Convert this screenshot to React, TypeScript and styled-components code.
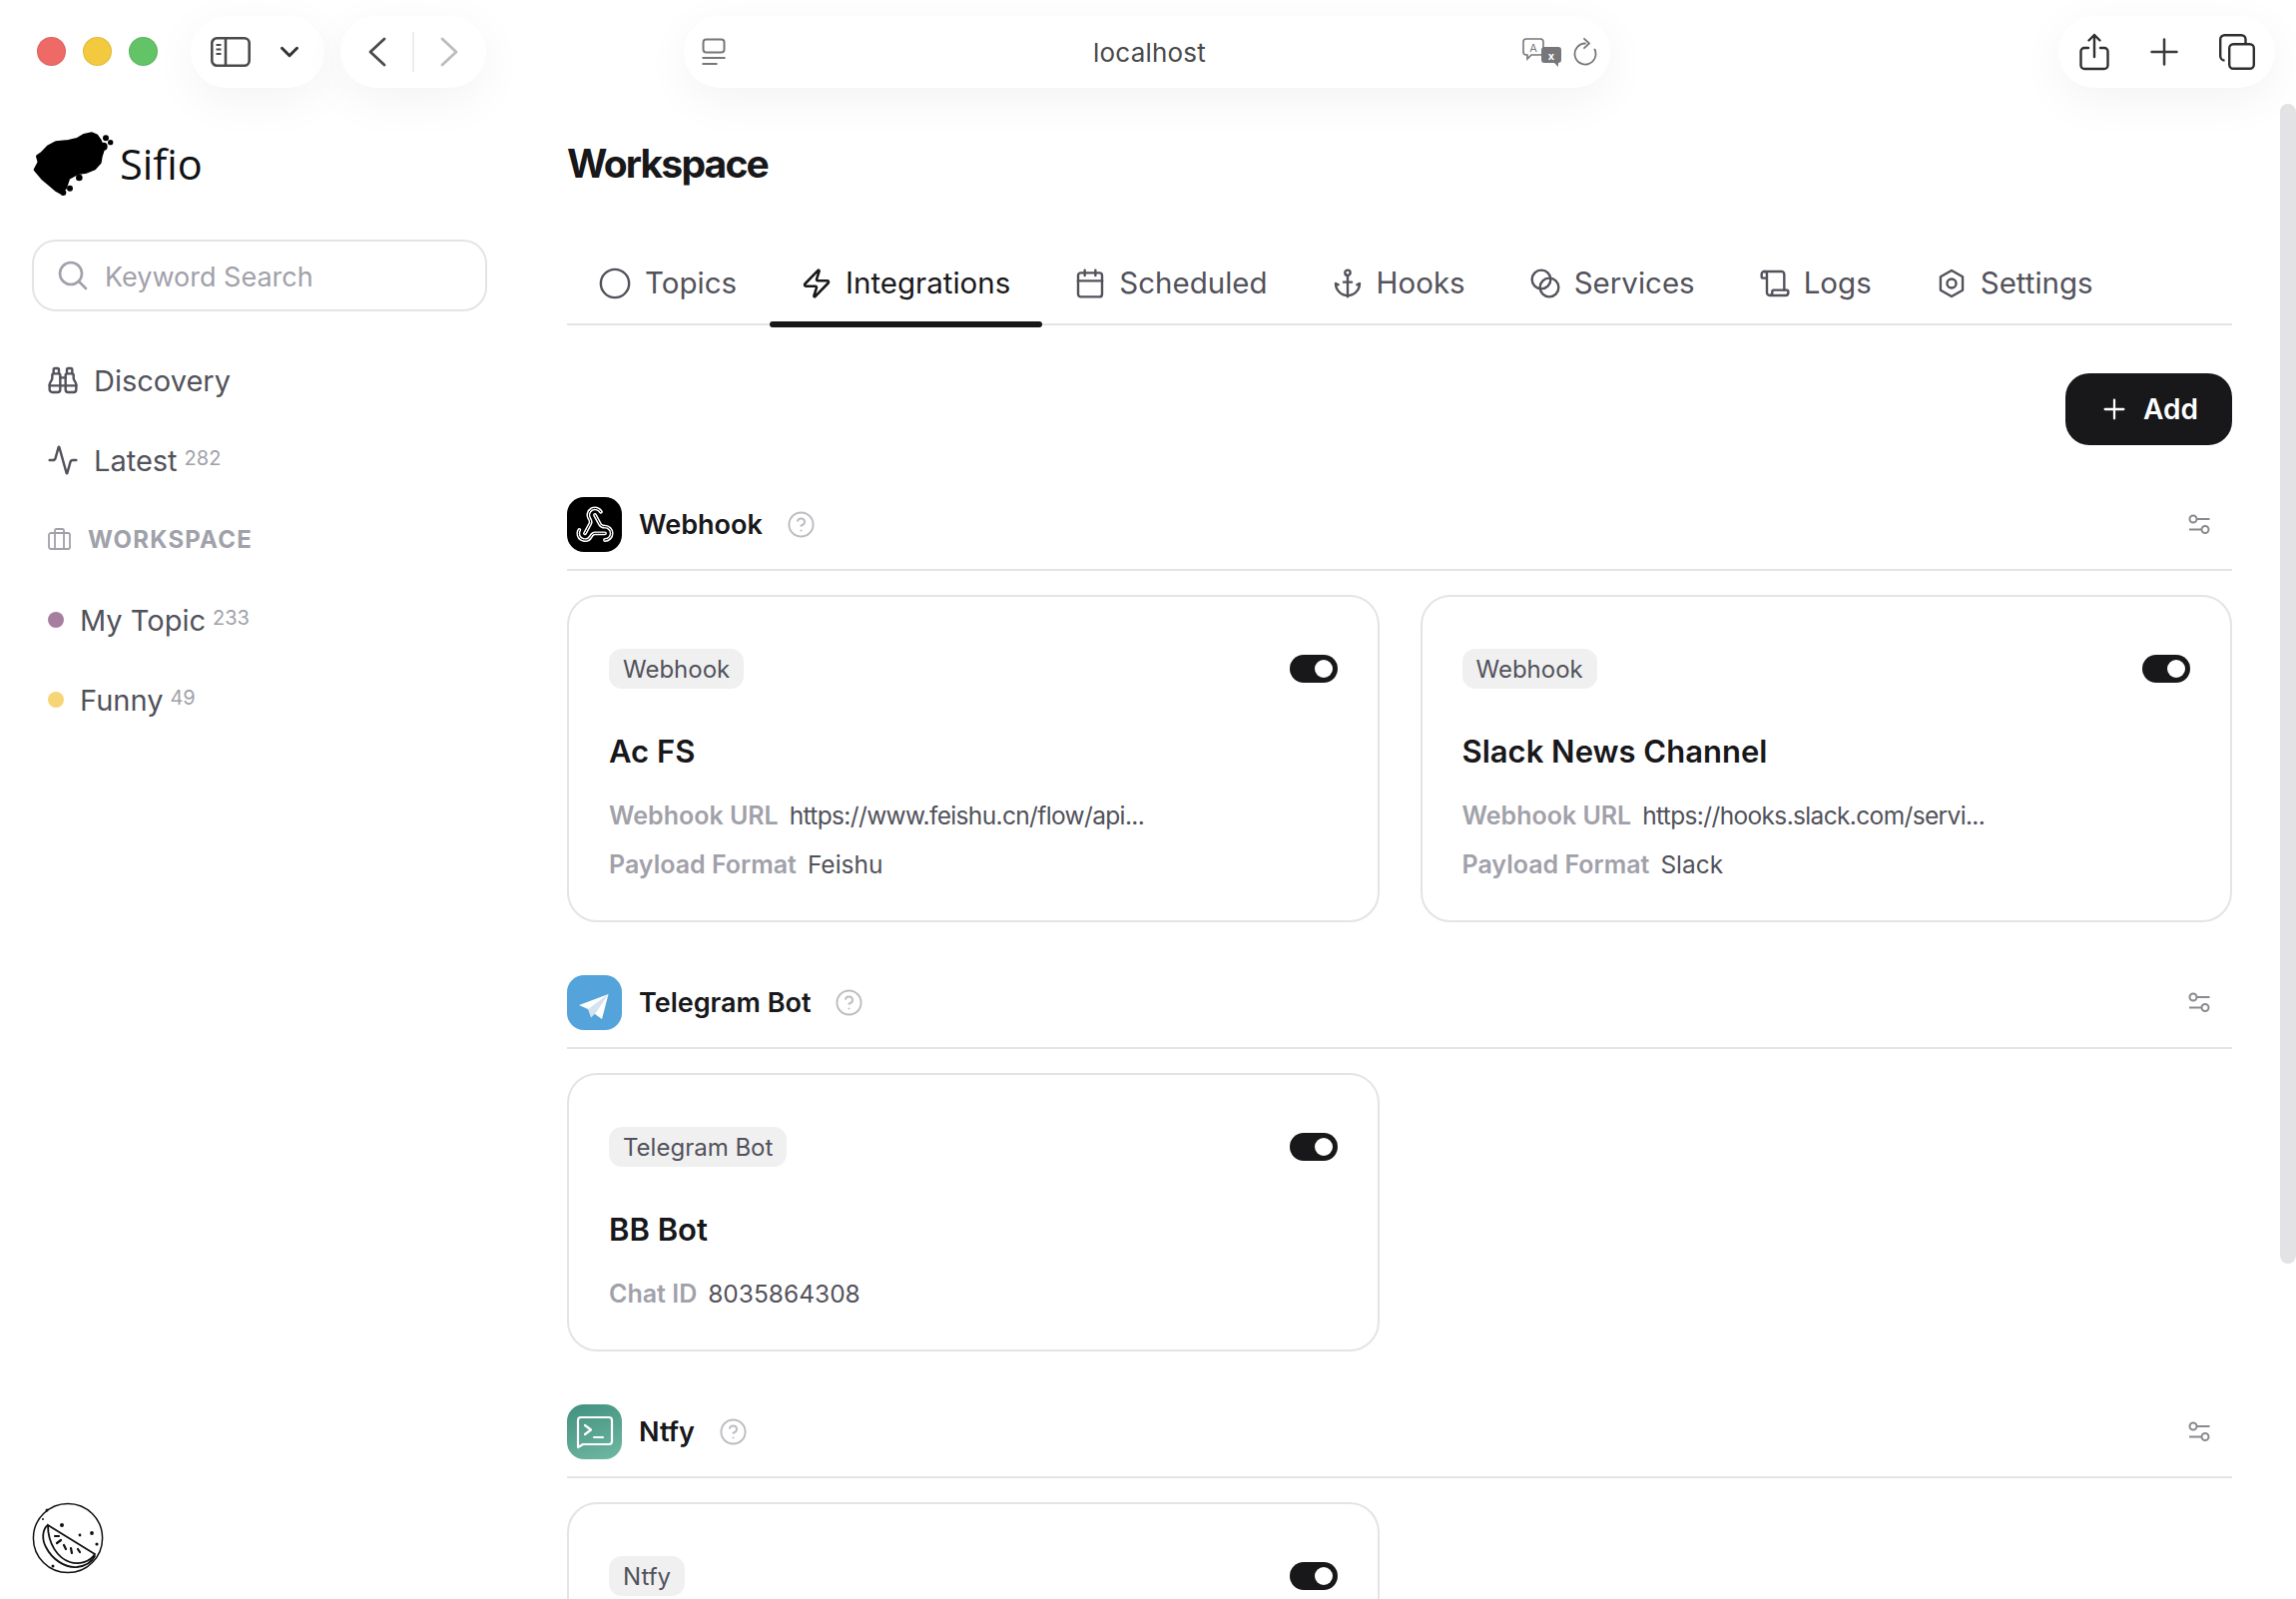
import styled, { createGlobalStyle } from "styled-components";
import {
  Activity,
  Anchor,
  Binoculars,
  Blend,
  Calendar,
  ChevronDown,
  Circle,
  CircleHelp,
  Plus,
  Scroll,
  Zap,
} from "lucide-react";
import type { ReactNode } from "react";

const SettingsHex = ({ size = 32 }: { size?: number }) => (
  <svg width={size} height={size} viewBox="0 0 24 24" fill="none" stroke="currentColor" strokeWidth="1.8" strokeLinejoin="round">
    <path d="M12 2.2 20.3 7v10L12 21.8 3.7 17V7z" />
    <circle cx="12" cy="12" r="3.4" />
  </svg>
);

const tabs: { label: string; icon: ReactNode; active?: boolean }[] = [
  { label: "Topics", icon: <Circle size={34} strokeWidth={1.7} /> },
  { label: "Integrations", icon: <Zap size={32} strokeWidth={1.9} />, active: true },
  { label: "Scheduled", icon: <Calendar size={32} strokeWidth={1.8} /> },
  { label: "Hooks", icon: <Anchor size={32} strokeWidth={1.8} /> },
  { label: "Services", icon: <Blend size={32} strokeWidth={1.8} /> },
  { label: "Logs", icon: <Scroll size={32} strokeWidth={1.8} /> },
  { label: "Settings", icon: <SettingsHex /> },
];

const Frog = () => (
  <svg width="84" height="67" viewBox="40 30 252 201" fill="#000">
    <path
      stroke="#000"
      strokeWidth="10"
      strokeLinejoin="round"
      d="M50 150 62 128 57 110 70 101 88 82 112 69 150 65 176 59 196 47 220 42 234 48 244 62 254 88 247 110 244 128 228 146 204 156 178 160 150 175 140 205 125 218 112 210 98 198 72 176z"
    />
    <circle cx="262" cy="55" r="9" />
    <circle cx="276" cy="68" r="8" />
    <circle cx="255" cy="80" r="12" />
    <circle cx="182" cy="174" r="10" />
    <circle cx="154" cy="206" r="9" />
    <circle cx="134" cy="219" r="9" />
  </svg>
);

const Melon = () => (
  <svg width="72" height="72" viewBox="0 0 72 72" fill="none" stroke="#111" strokeLinecap="round">
    <circle cx="36" cy="36" r="34.6" strokeWidth="1.5" />
    <path strokeWidth="1.8" d="M16 23 63 52C58 60 47 63 38 60 26 56 16 42 16 23z" />
    <path strokeWidth="1.8" d="M16 23C10 27 10 38 14 45 20 57 33 66 45 65 53 64 60 60 63 54" />
    <path strokeWidth="2.2" d="M23 34H27M25 41 29 38M32 43 34 47M39 46 40 51M46 47 48 50" />
    <g fill="#111" stroke="none">
      <circle cx="30" cy="23" r="2" />
      <circle cx="48" cy="33" r="1.4" />
      <circle cx="60" cy="31" r="1.9" />
      <circle cx="65" cy="42" r="1.6" />
      <circle cx="21" cy="64" r="1.5" />
      <circle cx="15" cy="8" r="1.5" />
      <circle cx="11" cy="17" r="1" />
    </g>
  </svg>
);

const WebhookGlyph = () => {
  const paths = (
    <>
      <path d="M18 16.98h-5.99c-1.1 0-1.95.94-2.48 1.9A4 4 0 0 1 2 17c.01-.7.2-1.4.57-2" />
      <path d="m6 17 3.13-5.78c.53-.97.1-2.18-.5-3.1a4 4 0 1 1 6.89-4.06" />
      <path d="m12 6 3.13 5.73C15.66 12.7 16.9 13 18 13a4 4 0 0 1 0 8" />
    </>
  );
  return (
    <svg width="40" height="40" viewBox="0 0 24 24" fill="none" strokeLinecap="round" strokeLinejoin="round">
      <g stroke="#fff" strokeWidth="2.3">{paths}</g>
      <g stroke="#000" strokeWidth="0.6">{paths}</g>
    </svg>
  );
};

const PlaneGlyph = () => (
  <svg width="55" height="55" viewBox="0 0 55 55">
    <path fill="#fff" d="M41.5 19 12 30l9 4 14 10z" />
    <path fill="#d3e3ef" d="M41.5 19 21 34l3 8.5 5-5z" />
  </svg>
);

const NtfyGlyph = () => (
  <svg width="38" height="34" viewBox="0 0 38 34" fill="none" stroke="#fff" strokeLinecap="round" strokeLinejoin="round">
    <path strokeWidth="2.2" d="M5 2h28a3 3 0 0 1 3 3v21a3 3 0 0 1-3 3H7l-5 3V5a3 3 0 0 1 3-3z" />
    <path strokeWidth="2.2" d="m9 10 6 4.5L9 19M18 22h9" />
  </svg>
);

const Chevron = ({ points, color }: { points: string; color: string }) => (
  <svg width="18" height="30" viewBox="0 0 18 30" fill="none" stroke={color} strokeWidth="2.8" strokeLinecap="round" strokeLinejoin="round">
    <path d={points} />
  </svg>
);

const integrations = [
  {
    name: "Webhook",
    logo: <WebhookGlyph />,
    logoBg: "#000",
    cards: [
      {
        title: "Ac FS",
        rows: [
          ["Webhook URL", "https://www.feishu.cn/flow/api..."],
          ["Payload Format", "Feishu"],
        ],
      },
      {
        title: "Slack News Channel",
        rows: [
          ["Webhook URL", "https://hooks.slack.com/servi..."],
          ["Payload Format", "Slack"],
        ],
      },
    ],
  },
  {
    name: "Telegram Bot",
    logo: <PlaneGlyph />,
    logoBg: "#54a3db",
    cards: [{ title: "BB Bot", rows: [["Chat ID", "8035864308"]] }],
  },
  {
    name: "Ntfy",
    logo: <NtfyGlyph />,
    logoBg: "linear-gradient(160deg, #41907f, #70b8a2)",
    cards: [{ title: "", rows: [] as string[][] }],
  },
];

export default function App() {
  return (
    <Shell>
      <GlobalStyle />
      <Toolbar>
        <Lights>
          <Light $color="#ee6a66" />
          <Light $color="#f3c940" />
          <Light $color="#62c466" />
        </Lights>
        <SidebarPill>
          <svg width="40" height="30" viewBox="0 0 40 30" fill="none" stroke="#4a4a4c" strokeWidth="2.6">
            <rect x="1.3" y="1.3" width="37.4" height="27.4" rx="5" />
            <path d="M15 1.3v27.4" />
            <path strokeWidth="2" d="M5.5 8h5M5.5 12.5h5M5.5 17h5" />
          </svg>
          <ChevronDown size={30} strokeWidth={2.4} color="#333" />
        </SidebarPill>
        <NavPill>
          <Chevron points="M16 2 2 15l14 13" color="#4a4a4c" />
          <NavDivider />
          <Chevron points="M2 2l14 13L2 28" color="#bcbcbc" />
        </NavPill>
        <AddressPill>
          <svg width="24" height="28" viewBox="0 0 24 28" fill="none" stroke="#77777a" strokeWidth="2">
            <rect x="1.5" y="1.5" width="21" height="13" rx="3" />
            <path d="M0.5 20h23M0.5 26h15" />
          </svg>
          <AddressText>localhost</AddressText>
          <AddressActions>
            <svg width="40" height="29" viewBox="0 0 40 29">
              <path fill="none" stroke="#77777a" strokeWidth="1.6" d="M4 1h14a3 3 0 0 1 3 3v10a3 3 0 0 1-3 3H9l-4 4v-4H4a3 3 0 0 1-3-3V4a3 3 0 0 1 3-3z" />
              <text x="11" y="13.5" fontSize="11" textAnchor="middle" fill="#77777a" fontFamily="Inter, sans-serif">A</text>
              <path fill="#77777a" d="M22 9h14a3 3 0 0 1 3 3v10a3 3 0 0 1-3 3v4l-4-4H22a3 3 0 0 1-3-3V12a3 3 0 0 1 3-3z" />
              <text x="29" y="21.5" fontSize="11" fontWeight="700" textAnchor="middle" fill="#fff" fontFamily="Inter, sans-serif">x</text>
            </svg>
            <svg width="24" height="28" viewBox="0 0 24 28" fill="none" stroke="#77777a" strokeWidth="1.8" strokeLinecap="round" strokeLinejoin="round">
              <path d="M12 5.500A10.500 10.500 0 1 0 21.500 11.500" />
              <path d="m11 0.800 5 4.700-5 4.700" />
            </svg>
          </AddressActions>
        </AddressPill>
        <ActionsPill>
          <svg width="30" height="38" viewBox="0 0 30 38" fill="none" stroke="#2f2f31" strokeWidth="2.4" strokeLinecap="round" strokeLinejoin="round">
            <path d="M9 15H5a3.500 3.500 0 0 0-3.500 3.500v14A3.500 3.500 0 0 0 5 36h20a3.500 3.500 0 0 0 3.500-3.500v-14A3.500 3.500 0 0 0 25 15h-4" />
            <path d="M15 24V2M9.500 7.500 15 2l5.500 5.500" />
          </svg>
          <svg width="28" height="28" viewBox="0 0 28 28" stroke="#3a3a3c" strokeWidth="2.500" strokeLinecap="round">
            <path d="M14 1.500v25M1.500 14h25" />
          </svg>
          <svg width="36" height="36" viewBox="0 0 36 36" fill="none" stroke="#2f2f31" strokeWidth="2.400">
            <rect x="10.200" y="10.200" width="24.600" height="24.600" rx="4" />
            <path d="M5.500 26.500A4.300 4.300 0 0 1 1.200 22.200V5.500a4.300 4.300 0 0 1 4.300-4.300h16.700a4.300 4.300 0 0 1 4.300 4.300v4.700" />
          </svg>
        </ActionsPill>
      </Toolbar>

      <Body>
        <Sidebar>
          <Brand>
            <Frog />
            <BrandName>Sifio</BrandName>
          </Brand>
          <SearchBox>
            <svg width="30" height="30" viewBox="0 0 30 30" fill="none" stroke="#a1a1aa" strokeWidth="2.600" strokeLinecap="round">
              <circle cx="13" cy="13" r="11" />
              <path d="m21 21 7 7" />
            </svg>
            <SearchHint>Keyword Search</SearchHint>
          </SearchBox>
          <NavRow>
            <NavIcon>
              <Binoculars size={32} strokeWidth={1.800} />
            </NavIcon>
            <NavLabel>Discovery</NavLabel>
          </NavRow>
          <NavRow>
            <NavIcon>
              <Activity size={32} strokeWidth={1.800} />
            </NavIcon>
            <NavLabel>Latest</NavLabel>
            <Count>282</Count>
          </NavRow>
          <GroupRow>
            <svg width="24" height="24" viewBox="0 0 24 24" fill="none" stroke="#a1a1aa" strokeWidth="1.800" strokeLinejoin="round">
              <rect x="1" y="6" width="21" height="16" rx="2" />
              <path d="M7 22V3.500A1.500 1.500 0 0 1 8.500 2h6A1.500 1.500 0 0 1 16 3.500V22" />
            </svg>
            <GroupLabel>WORKSPACE</GroupLabel>
          </GroupRow>
          <NavRow>
            <Dot $color="#a67fa0" />
            <NavLabel>My Topic</NavLabel>
            <Count>233</Count>
          </NavRow>
          <NavRow>
            <Dot $color="#f6d577" />
            <NavLabel>Funny</NavLabel>
            <Count>49</Count>
          </NavRow>
          <Avatar>
            <Melon />
          </Avatar>
        </Sidebar>

        <Main>
          <PageTitle>Workspace</PageTitle>
          <TabBar>
            {tabs.map((tab) => (
              <Tab key={tab.label} $active={tab.active}>
                {tab.icon}
                <TabLabel>{tab.label}</TabLabel>
              </Tab>
            ))}
          </TabBar>
          <AddRow>
            <AddButton>
              <Plus size={32} strokeWidth={1.700} />
              Add
            </AddButton>
          </AddRow>
          {integrations.map((group) => (
            <Section key={group.name}>
              <SectionHead>
                <Logo $bg={group.logoBg}>{group.logo}</Logo>
                <SectionName>{group.name}</SectionName>
                <CircleHelp size={29} strokeWidth={1.600} color="#bdbdc2" />
                <SectionTune>
                  <svg width="22" height="21" viewBox="0 0 22 21" fill="none" stroke="#8a8a8e" strokeWidth="2">
                    <circle cx="5" cy="5" r="3.500" />
                    <path d="M9 5h12.500M1 15.500h12" />
                    <circle cx="17" cy="15.500" r="3.500" />
                  </svg>
                </SectionTune>
              </SectionHead>
              <CardGrid>
                {group.cards.map((card) => (
                  <Card key={card.title}>
                    <CardTop>
                      <Badge>{group.name}</Badge>
                      <Toggle>
                        <Knob />
                      </Toggle>
                    </CardTop>
                    <CardTitle>{card.title}</CardTitle>
                    <CardRows>
                      {card.rows.map(([label, value]) => (
                        <CardRow key={label}>
                          <RowLabel>{label}</RowLabel>
                          <RowValue $tight={value.startsWith("http")}>{value}</RowValue>
                        </CardRow>
                      ))}
                    </CardRows>
                  </Card>
                ))}
              </CardGrid>
            </Section>
          ))}
        </Main>
      </Body>
      <ScrollThumb />
    </Shell>
  );
}

const GlobalStyle = createGlobalStyle`
  html, body {
    margin: 0;
    height: 100%;
    overflow: hidden;
    background: #fff;
  }
  body {
    font-family: Inter, "Liberation Sans", sans-serif;
    color: #18181b;
  }
  * {
    box-sizing: border-box;
  }
`;

const Shell = styled.div`
  position: relative;
  height: 100vh;
  overflow: hidden;
  display: flex;
  flex-direction: column;
`;

const Toolbar = styled.header`
  display: flex;
  align-items: flex-start;
  height: 104px;
  flex: none;
  padding: 16px 21px 0 37px;
  position: relative;
  z-index: 2;
`;

const Lights = styled.div`
  display: flex;
  gap: 17px;
  margin: 21px 33px 0 0;
`;

const Light = styled.span<{ $color: string }>`
  width: 29px;
  height: 29px;
  border-radius: 50%;
  background: ${(p) => p.$color};
  box-shadow: inset 0 0 0 1px rgba(0, 0, 0, 0.08);
`;

const Pill = styled.div`
  height: 72px;
  border-radius: 36px;
  background: #fff;
  display: flex;
  align-items: center;
  box-shadow: 0 12px 48px rgba(0, 0, 0, 0.05);
`;

const SidebarPill = styled(Pill)`
  width: 134px;
  padding: 0 20px 0 20px;
  justify-content: space-between;
  margin-right: 16px;
`;

const NavPill = styled(Pill)`
  width: 146px;
  padding: 0 28px;
  justify-content: space-between;
  margin-right: 198px;
`;

const NavDivider = styled.span`
  width: 2px;
  height: 40px;
  background: #ececec;
`;

const AddressPill = styled(Pill)`
  width: 928px;
  padding: 0 13px 0 18px;
  display: grid;
  grid-template-columns: 1fr auto 1fr;
`;

const AddressText = styled.span`
  font-size: 26px;
  color: #4a4a4c;
  letter-spacing: 0.2px;
`;

const AddressActions = styled.div`
  display: flex;
  align-items: center;
  gap: 11px;
  justify-self: end;
`;

const ActionsPill = styled(Pill)`
  width: 217px;
  margin-left: auto;
  padding: 0 20px 0 21px;
  justify-content: space-between;
`;

const Body = styled.div`
  display: flex;
  flex: 1;
  min-height: 0;
`;

const Sidebar = styled.aside`
  width: 568px;
  flex: none;
  display: flex;
  flex-direction: column;
  padding: 26px 80px 25px 32px;
`;

const Brand = styled.div`
  display: flex;
  align-items: flex-start;
  height: 66px;
  margin-bottom: 44px;
`;

const BrandName = styled.span`
  font-family: "Open Sans", sans-serif;
  font-size: 41.5px;
  line-height: 58px;
  margin: 5px 0 0 4px;
  color: #111;
  font-variant-ligatures: common-ligatures;
`;

const SearchBox = styled.div`
  height: 72px;
  border: 2px solid #e4e4e7;
  border-radius: 24px;
  display: flex;
  align-items: center;
  gap: 17px;
  padding-left: 24px;
  margin-bottom: 29px;
`;

const SearchHint = styled.span`
  font-size: 27px;
  color: #a1a1aa;
  padding-top: 2px;
`;

const NavRow = styled.div`
  display: flex;
  align-items: center;
  height: 80px;
  padding-left: 16px;
`;

const NavIcon = styled.span`
  display: flex;
  width: 47px;
  margin-left: -1px;
  color: #52525b;
`;

const NavLabel = styled.span`
  font-size: 29px;
  color: #52525b;
`;

const Count = styled.span`
  font-size: 20px;
  color: #a1a1aa;
  margin: -4px 0 0 7px;
`;

const GroupRow = styled.div`
  display: flex;
  align-items: center;
  gap: 16px;
  height: 80px;
  padding-left: 16px;
  padding-bottom: 2px;
`;

const GroupLabel = styled.span`
  font-size: 24px;
  font-weight: 700;
  letter-spacing: 1.200px;
  color: #a1a1aa;
`;

const Dot = styled.span<{ $color: string }>`
  width: 16px;
  height: 16px;
  border-radius: 50%;
  background: ${(p) => p.$color};
  margin-right: 16px;
`;

const Avatar = styled.div`
  margin-top: auto;
  display: flex;
`;

const Main = styled.main`
  flex: 1;
  min-width: 0;
  padding: 30px 64px 0 0;
`;

const PageTitle = styled.h1`
  margin: 0 0 49px;
  font-size: 39px;
  line-height: 60px;
  font-weight: 700;
  letter-spacing: -1.800px;
  color: #18181b;
`;

const TabBar = styled.nav`
  display: flex;
  gap: 1px;
  height: 83px;
  border-bottom: 2px solid #e4e4e7;
`;

const Tab = styled.div<{ $active?: boolean }>`
  position: relative;
  display: flex;
  align-items: center;
  gap: 13px;
  padding: 0 32px 0 31px;
  font-size: 29.5px;
  color: ${(p) => (p.$active ? "#18181b" : "#52525b")};

  ${(p) =>
    p.$active &&
    `
    &::after {
      content: "";
      position: absolute;
      left: 0;
      right: 0;
      bottom: -4px;
      height: 6px;
      border-radius: 3px;
      background: #18181b;
    }
  `}
`;

const TabLabel = styled.span`
  padding-bottom: 2px;
`;

const AddRow = styled.div`
  display: flex;
  justify-content: flex-end;
  margin: 48px 0 52px;
`;

const AddButton = styled.button`
  display: flex;
  align-items: center;
  gap: 13px;
  height: 72px;
  padding: 0 34px 0 33px;
  border: none;
  border-radius: 24px;
  background: #18181b;
  color: #fff;
  font: 600 28px Inter, sans-serif;
`;

const Section = styled.section`
  margin-bottom: 53px;
`;

const SectionHead = styled.div`
  display: flex;
  align-items: center;
  padding-bottom: 17px;
  border-bottom: 2px solid #e4e4e7;
  margin-bottom: 24px;
`;

const Logo = styled.div<{ $bg: string }>`
  width: 55px;
  height: 55px;
  border-radius: 17px;
  background: ${(p) => p.$bg};
  display: flex;
  align-items: center;
  justify-content: center;
  margin-right: 17px;
`;

const SectionName = styled.span`
  font-size: 27px;
  font-weight: 600;
  color: #18181b;
  margin-right: 24px;
`;

const SectionTune = styled.span`
  display: flex;
  margin-left: auto;
  margin-right: 22px;
`;

const CardGrid = styled.div`
  display: grid;
  grid-template-columns: 1fr 1fr;
  gap: 41px;
`;

const Card = styled.article`
  border: 2px solid #e4e4e7;
  border-radius: 30px;
  padding: 52px 40px 37px;
`;

const CardTop = styled.div`
  display: flex;
  align-items: center;
  justify-content: space-between;
  height: 40px;
  margin-bottom: 41px;
`;

const Badge = styled.span`
  height: 40px;
  padding: 0 14px;
  display: flex;
  align-items: center;
  border-radius: 13px;
  background: #f0f0f1;
  font-size: 24px;
  color: #52525b;
`;

const Toggle = styled.span`
  width: 48px;
  height: 28px;
  border-radius: 14px;
  background: #18181b;
  display: flex;
  align-items: center;
  justify-content: flex-end;
  padding-right: 5px;
`;

const Knob = styled.span`
  width: 18px;
  height: 18px;
  border-radius: 50%;
  background: #fff;
`;

const CardTitle = styled.h3`
  margin: 0 0 23px;
  font-size: 31px;
  line-height: 44px;
  font-weight: 600;
  color: #18181b;
`;

const CardRows = styled.div`
  display: flex;
  flex-direction: column;
  gap: 11px;
`;

const CardRow = styled.div`
  display: flex;
  align-items: center;
  gap: 11px;
  height: 38px;
  font-size: 24.5px;
`;

const RowLabel = styled.span`
  font-size: 25px;
  font-weight: 600;
  color: #a1a1aa;
`;

const RowValue = styled.span<{ $tight?: boolean }>`
  color: #52525b;
  letter-spacing: ${(p) => (p.$tight ? "-0.65px" : "0")};
`;

const ScrollThumb = styled.div`
  position: absolute;
  top: 104px;
  right: 0;
  width: 16px;
  height: 1162px;
  border-radius: 8px;
  background: #e3e3e6;
`;
